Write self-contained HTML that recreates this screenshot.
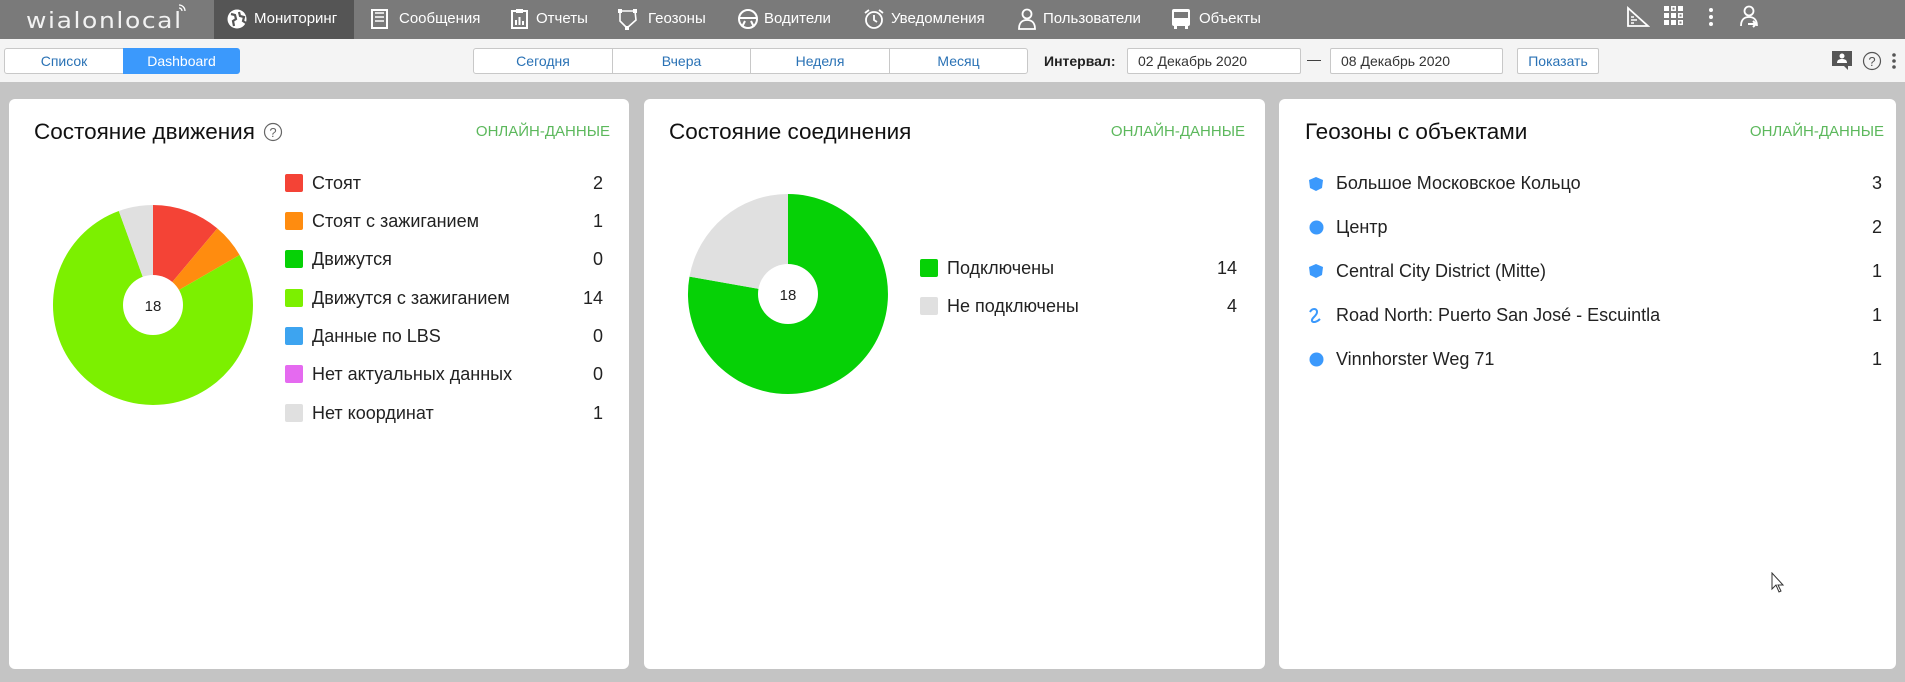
<!DOCTYPE html>
<html><head><meta charset="utf-8"><style>
*{box-sizing:border-box;margin:0;padding:0}
body{width:1905px;height:682px;overflow:hidden;background:#c4c4c4;font-family:"Liberation Sans",Arial,sans-serif;position:relative}
.a{position:absolute;white-space:nowrap}
#top{position:absolute;left:0;top:0;width:1905px;height:39px;background:#7a7a7a}
#bar{position:absolute;left:0;top:39px;width:1905px;height:43px;background:#f4f4f4}
.nav{color:#fff;font-size:15px;top:10px}
.ic{position:absolute;top:8px}
.btn{position:absolute;top:48px;height:26px;border:1px solid #c8c8c8;background:#fff;color:#2a72b5;font-size:14px;text-align:center;line-height:24px}
.card{position:absolute;top:99px;height:570px;background:#fff;border-radius:6px}
.title{font-size:22.5px;color:#111;top:119px}
.green{font-size:15px;color:#5cb85c;top:123px}
.lg{font-size:18px;color:#222}
.sq{position:absolute;width:18px;height:18px;border-radius:2px}
.num{font-size:18px;color:#222;text-align:right;width:40px}
</style></head><body>
<div id="top"></div>
<div class="a" style="left:214px;top:0;width:140px;height:39px;background:#555"></div>
<div class="a" style="left:26px;top:6px;color:#f2f2f2;font-size:25px;letter-spacing:1.6px;font-family:'DejaVu Sans',sans-serif;font-weight:normal;transform:scaleY(0.9)">wialonlocal</div>
<svg class="a" style="left:178px;top:4px" width="8" height="8"><path d="M1 1a6 6 0 0 1 6 6M1 4a3 3 0 0 1 3 3" stroke="#fff" fill="none" stroke-width="1.3"/></svg>
<svg class="ic" style="left:226px" width="22" height="22"><circle cx="11" cy="11" r="9.5" fill="#fff"/><path d="M5 6l4 1 1 4-3 2 1 5M13 4l1 4 4 1-1 4 3 2" stroke="#555" stroke-width="2.2" fill="none"/></svg>
<div class="a nav" style="left:254px">Мониторинг</div>
<svg class="ic" style="left:370px" width="20" height="22"><rect x="2" y="2" width="15" height="18" fill="none" stroke="#fff" stroke-width="2"/><path d="M5 9h9M5 13h9M5 5h9" stroke="#fff" stroke-width="1.5"/></svg>
<div class="a nav" style="left:399px">Сообщения</div>
<svg class="ic" style="left:510px" width="20" height="22"><rect x="2" y="3" width="15" height="17" fill="none" stroke="#fff" stroke-width="2"/><path d="M6 17v-5M9.5 17v-8M13 17v-4" stroke="#fff" stroke-width="2"/><rect x="6" y="1" width="7" height="4" fill="#fff"/></svg>
<div class="a nav" style="left:536px">Отчеты</div>
<svg class="ic" style="left:617px" width="22" height="22"><path d="M3 3L18 3 19 12 10 20 3 13Z" fill="none" stroke="#fff" stroke-width="1.6"/><rect x="1" y="1" width="4" height="4" fill="#fff"/><rect x="16" y="1" width="4" height="4" fill="#fff"/><rect x="8" y="18" width="4" height="4" fill="#fff"/></svg>
<div class="a nav" style="left:648px">Геозоны</div>
<svg class="ic" style="left:737px" width="22" height="22"><circle cx="11" cy="11" r="9" fill="none" stroke="#fff" stroke-width="2"/><path d="M3 10h16M8 13l-3 6M14 13l3 6" stroke="#fff" stroke-width="2"/></svg>
<div class="a nav" style="left:764px">Водители</div>
<svg class="ic" style="left:863px" width="22" height="22"><circle cx="11" cy="12" r="8" fill="none" stroke="#fff" stroke-width="1.8"/><path d="M11 7v5l3 2M2 5l4-3M20 5l-4-3" stroke="#fff" stroke-width="1.8" fill="none"/></svg>
<div class="a nav" style="left:891px">Уведомления</div>
<svg class="ic" style="left:1016px" width="22" height="22"><circle cx="11" cy="6" r="4.5" fill="none" stroke="#fff" stroke-width="1.8"/><path d="M3 21c0-6 3-9 8-9s8 3 8 9Z" fill="none" stroke="#fff" stroke-width="1.8"/></svg>
<div class="a nav" style="left:1043px">Пользователи</div>
<svg class="ic" style="left:1170px" width="22" height="22"><rect x="2" y="1" width="18" height="17" rx="2" fill="#fff"/><rect x="4" y="4" width="14" height="6" fill="#7a7a7a"/><rect x="4" y="18" width="3" height="3" fill="#fff"/><rect x="15" y="18" width="3" height="3" fill="#fff"/></svg>
<div class="a nav" style="left:1199px">Объекты</div>
<svg class="a" style="left:1626px;top:6px" width="24" height="22"><path d="M2 2v18h20Z" fill="none" stroke="#fff" stroke-width="1.8"/><path d="M5 14h6M5 17h3M5 11h3" stroke="#fff" stroke-width="1.5"/></svg>
<svg class="a" style="left:1663px;top:5px" width="22" height="22"><g fill="#fff"><rect x="1" y="1" width="5" height="5"/><rect x="8" y="1" width="5" height="5"/><rect x="15" y="1" width="5" height="5"/><rect x="1" y="8" width="5" height="5"/><rect x="8" y="8" width="5" height="5"/><rect x="15" y="8" width="5" height="5"/><rect x="1" y="15" width="5" height="5"/><rect x="8" y="15" width="5" height="5"/><rect x="15" y="15" width="5" height="5"/></g><g fill="#7a7a7a"><rect x="9.5" y="2.5" width="2" height="2"/><rect x="16.5" y="9.5" width="2" height="2"/><rect x="16.5" y="16.5" width="2" height="2"/></g></svg>
<svg class="a" style="left:1708px;top:7px" width="6" height="20"><g fill="#fff"><circle cx="3" cy="3" r="2"/><circle cx="3" cy="10" r="2"/><circle cx="3" cy="17" r="2"/></g></svg>
<svg class="a" style="left:1739px;top:5px" width="22" height="24"><circle cx="10" cy="6" r="4.5" fill="none" stroke="#fff" stroke-width="1.8"/><path d="M2 21c0-6 3-9 8-9s8 3 8 9" fill="none" stroke="#fff" stroke-width="1.8"/><path d="M9 19h8M14 16l3 3-3 3" stroke="#fff" stroke-width="2" fill="none"/></svg>

<div id="bar"></div>
<div class="btn" style="left:4px;width:120px;border-radius:3px 0 0 3px">Список</div>
<div class="btn" style="left:123px;width:117px;background:#3b99fc;border-color:#3b99fc;color:#fff;border-radius:0 3px 3px 0">Dashboard</div>
<div class="btn" style="left:473px;width:140px;border-radius:3px 0 0 3px">Сегодня</div>
<div class="btn" style="left:612px;width:139px">Вчера</div>
<div class="btn" style="left:750px;width:140px">Неделя</div>
<div class="btn" style="left:889px;width:139px;border-radius:0 3px 3px 0">Месяц</div>
<div class="a" style="left:1044px;top:53px;font-size:14px;font-weight:bold;color:#222">Интервал:</div>
<div class="btn" style="left:1127px;width:174px;text-align:left;padding-left:10px;color:#333;border-radius:2px">02 Декабрь 2020</div>
<div class="a" style="left:1307px;top:51px;font-size:14px;color:#333">—</div>
<div class="btn" style="left:1330px;width:173px;text-align:left;padding-left:10px;color:#333;border-radius:2px">08 Декабрь 2020</div>
<div class="btn" style="left:1517px;width:82px;border-radius:2px">Показать</div>
<svg class="a" style="left:1831px;top:50px" width="22" height="22"><path d="M1 1h20v15h-4v4l-4-4H1Z" fill="#555"/><circle cx="11" cy="6" r="2.5" fill="#fff"/><path d="M6 13c0-3 2-4 5-4s5 1 5 4Z" fill="#fff"/></svg>
<svg class="a" style="left:1862px;top:51px" width="20" height="20"><circle cx="10" cy="10" r="8.5" fill="none" stroke="#555" stroke-width="1.2"/><text x="10" y="15" font-size="13" text-anchor="middle" fill="#555" font-family="Liberation Sans">?</text></svg>
<svg class="a" style="left:1891px;top:52px" width="6" height="18"><g fill="#555"><circle cx="3" cy="3" r="1.8"/><circle cx="3" cy="9" r="1.8"/><circle cx="3" cy="15" r="1.8"/></g></svg>

<div class="card" style="left:9px;width:620px"></div>
<div class="card" style="left:644px;width:621px"></div>
<div class="card" style="left:1279px;width:617px"></div>

<div class="a title" style="left:34px">Состояние движения</div>
<svg class="a" style="left:263px;top:122px" width="20" height="20"><circle cx="10" cy="10" r="8.5" fill="none" stroke="#666" stroke-width="1.2"/><text x="10" y="15" font-size="13" text-anchor="middle" fill="#666" font-family="Liberation Sans">?</text></svg>
<div class="a green" style="right:1295px">ОНЛАЙН-ДАННЫЕ</div>
<svg class="a" style="left:0;top:0" width="640" height="682">
<path d="M153 305L153 205A100 100 0 0 1 217.3 228.4Z" fill="#f44336"/>
<path d="M153 305L217.3 228.4A100 100 0 0 1 239.6 255Z" fill="#ff8c0f"/>
<path d="M153 305L239.6 255A100 100 0 1 1 118.8 211Z" fill="#7cf000"/>
<path d="M153 305L118.8 211A100 100 0 0 1 153 205Z" fill="#e0e0e0"/>
<circle cx="153" cy="305" r="30" fill="#fff"/>
<text x="153" y="311" font-size="15" text-anchor="middle" fill="#222" font-family="Liberation Sans">18</text>
</svg>
<div class="sq" style="left:285px;top:174px;background:#f44336"></div>
<div class="sq" style="left:285px;top:212px;background:#ff8c0f"></div>
<div class="sq" style="left:285px;top:250px;background:#06d106"></div>
<div class="sq" style="left:285px;top:289px;background:#7cf000"></div>
<div class="sq" style="left:285px;top:327px;background:#3da4f0"></div>
<div class="sq" style="left:285px;top:365px;background:#e56af0"></div>
<div class="sq" style="left:285px;top:404px;background:#e0e0e0"></div>
<div class="a lg" style="left:312px;top:173px">Стоят</div>
<div class="a lg" style="left:312px;top:211px">Стоят с зажиганием</div>
<div class="a lg" style="left:312px;top:249px">Движутся</div>
<div class="a lg" style="left:312px;top:288px">Движутся с зажиганием</div>
<div class="a lg" style="left:312px;top:326px">Данные по LBS</div>
<div class="a lg" style="left:312px;top:364px">Нет актуальных данных</div>
<div class="a lg" style="left:312px;top:403px">Нет координат</div>
<div class="a num" style="left:563px;top:173px">2</div>
<div class="a num" style="left:563px;top:211px">1</div>
<div class="a num" style="left:563px;top:249px">0</div>
<div class="a num" style="left:563px;top:288px">14</div>
<div class="a num" style="left:563px;top:326px">0</div>
<div class="a num" style="left:563px;top:364px">0</div>
<div class="a num" style="left:563px;top:403px">1</div>

<div class="a title" style="left:669px">Состояние соединения</div>
<div class="a green" style="right:660px">ОНЛАЙН-ДАННЫЕ</div>
<svg class="a" style="left:0;top:0" width="1270" height="682">
<path d="M788 294L788 194A100 100 0 1 1 689.5 276.6Z" fill="#06d106"/>
<path d="M788 294L689.5 276.6A100 100 0 0 1 788 194Z" fill="#e0e0e0"/>
<circle cx="788" cy="294" r="30" fill="#fff"/>
<text x="788" y="300" font-size="15" text-anchor="middle" fill="#222" font-family="Liberation Sans">18</text>
</svg>
<div class="sq" style="left:920px;top:259px;background:#06d106"></div>
<div class="sq" style="left:920px;top:297px;background:#e0e0e0"></div>
<div class="a lg" style="left:947px;top:258px">Подключены</div>
<div class="a lg" style="left:947px;top:296px">Не подключены</div>
<div class="a num" style="left:1197px;top:258px">14</div>
<div class="a num" style="left:1197px;top:296px">4</div>

<div class="a title" style="left:1305px">Геозоны с объектами</div>
<div class="a green" style="right:21px">ОНЛАЙН-ДАННЫЕ</div>
<svg class="a" style="left:1308px;top:176px" width="16" height="16"><path d="M8 1L15 4 14 12 8 15 2 12 1 4Z" fill="#3b99fc"/></svg>
<svg class="a" style="left:1309px;top:220px" width="16" height="16"><circle cx="7.5" cy="7.5" r="7" fill="#3b99fc"/></svg>
<svg class="a" style="left:1308px;top:263px" width="16" height="16"><path d="M8 1L15 4 14 12 8 15 2 12 1 4Z" fill="#3b99fc"/></svg>
<svg class="a" style="left:1308px;top:307px" width="16" height="16"><path d="M2 5c2-4 7-4 7 0s-6 6-5 9c1 2 5 1 8-2" stroke="#3b99fc" stroke-width="2" fill="none"/></svg>
<svg class="a" style="left:1309px;top:352px" width="16" height="16"><circle cx="7.5" cy="7.5" r="7" fill="#3b99fc"/></svg>
<div class="a lg" style="left:1336px;top:173px">Большое Московское Кольцо</div>
<div class="a lg" style="left:1336px;top:217px">Центр</div>
<div class="a lg" style="left:1336px;top:261px">Central City District (Mitte)</div>
<div class="a lg" style="left:1336px;top:305px">Road North: Puerto San José - Escuintla</div>
<div class="a lg" style="left:1336px;top:349px">Vinnhorster Weg 71</div>
<div class="a num" style="left:1842px;top:173px">3</div>
<div class="a num" style="left:1842px;top:217px">2</div>
<div class="a num" style="left:1842px;top:261px">1</div>
<div class="a num" style="left:1842px;top:305px">1</div>
<div class="a num" style="left:1842px;top:349px">1</div>
<svg class="a" style="left:1771px;top:572px" width="14" height="22"><path d="M1 1v16l4-4 3 7 2-1-3-6h5Z" fill="#fff" stroke="#333" stroke-width="1"/></svg>
</body></html>
